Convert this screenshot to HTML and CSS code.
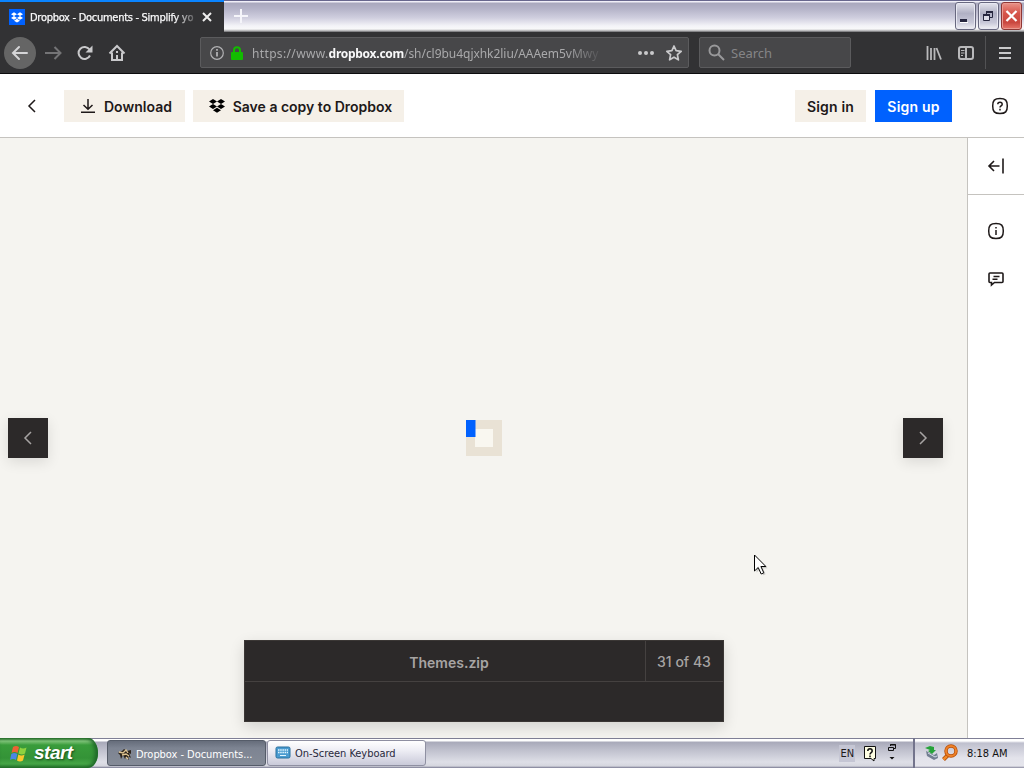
FILE: index.html
```html
<!DOCTYPE html>
<html lang="en">
<head>
<meta charset="utf-8">
<title>Dropbox - Documents - Simplify your life</title>
<link rel="stylesheet" href="styles.css">
</head>
<body>
<svg class="defs" width="0" height="0" aria-hidden="true">
  <symbol id="box" viewBox="0 0 16 14"><path d="M4 0 8 2.500 4 5 0 2.500zM12 0l4 2.500-4 2.500-4-2.500zM4 5l4 2.500L4 10 0 7.500zM12 5l4 2.500-4 2.500-4-2.500zM8 8.700l4 2.500L8 13.700l-4-2.500z"/></symbol>
</svg>
<div class="screen">
  <header class="tabs">
    <div class="tab">
      <span class="favicon"><svg width="12" height="11"><use href="#box"/></svg></span>
      <span class="tab-title">Dropbox - Documents - Simplify yo</span>
      <svg class="tab-close" width="10" height="10" viewBox="0 0 10 10"><path d="M1 1l8 8M9 1L1 9"/></svg>
    </div>
    <svg class="plus" width="16" height="16" viewBox="0 0 16 16"><path d="M8 1v14M1 8h14"/></svg>
    <div class="win-buttons">
      <span class="win"><svg width="20" height="27"><path d="M4 17.500h7" stroke="#26263e" stroke-width="3"/><path d="M4 19.500h8" stroke="#fff"/></svg></span>
      <span class="win"><svg width="20" height="27" fill="none" stroke="#26263e"><path d="M7.500 11V8.500h6v6H11"/><path d="M7 9h7" stroke-width="2"/><path d="M4.500 11.500h6v6h-6z" fill="#dcdce8"/><path d="M4 12h7" stroke-width="2"/></svg></span>
      <span class="win win-close"><svg width="20" height="27" fill="none" stroke="#fff" stroke-width="2.200"><path d="M4.500 8l10 10M14.500 8l-10 10"/></svg></span>
    </div>
  </header>

  <nav class="toolbar">
    <span class="back"><svg width="32" height="32" fill="none" stroke="#d5d5d7" stroke-width="2"><path d="M23 16H9.500M15 10l-6 6 6 6" stroke-linecap="round"/></svg></span>
    <svg class="fwd" width="18" height="16" fill="none" stroke="#747476" stroke-width="2"><path d="M0 8h15M9.500 2l6 6-6 6"/></svg>
    <svg class="reload" width="18" height="18" fill="none" stroke="#c9c9cb" stroke-width="2"><path d="M14 11.500A6 6 0 1 1 13.500 5.500"/><path d="M16.500 1.500v7h-7z" fill="#c9c9cb" stroke="none"/></svg>
    <svg class="home" width="18" height="18" fill="none" stroke="#c9c9cb" stroke-width="2"><path d="M1.500 9.500L9 2l7.500 7.500M4 8.500V16h10V8.500M9 16v-5"/><path d="M8 7h2v2H8z" fill="#c9c9cb" stroke="none"/></svg>
    <div class="urlbar">
      <svg width="16" height="16" fill="none" stroke="#b1b1b3" stroke-width="1.200"><circle cx="8" cy="8" r="6.300"/><path d="M8 7v4.500M8 4v1.700" stroke-width="1.800"/></svg>
      <svg class="lock" width="14" height="16"><path d="M4 7V5.300a3 3 0 0 1 6 0V7" fill="none" stroke="#12bc00" stroke-width="2"/><rect x="1" y="7" width="12" height="8" rx="1" fill="#12bc00"/></svg>
      <span class="url"><span class="scheme">https://www.</span><b>dropbox.com</b>/sh/cl9bu4qjxhk2liu/AAAem5vMwy</span>
      <svg class="dots" width="18" height="6" fill="#c9c9cb"><circle cx="3" cy="3" r="2"/><circle cx="9" cy="3" r="2"/><circle cx="15" cy="3" r="2"/></svg>
      <svg width="18" height="18" fill="none" stroke="#c9c9cb" stroke-width="1.700" stroke-linejoin="round"><path d="M9 2l2.100 4.700 5.100.6-3.800 3.400 1 5.100L9 13.200l-4.400 2.600 1-5.100-3.800-3.400 5.100-.6z"/></svg>
    </div>
    <div class="search">
      <svg width="17" height="17" fill="none" stroke="#99999b" stroke-width="2"><circle cx="6.500" cy="6.500" r="5"/><path d="M10 10l6 6"/></svg>
      <span>Search</span>
    </div>
    <svg class="library" width="16" height="16" fill="none" stroke="#b9b9bb" stroke-width="1.800"><path d="M1.500 1v14M5 3v12M8.500 3v12M10.500 3l4.500 11.500"/></svg>
    <svg class="sidebar-icon" width="16" height="14" fill="none" stroke="#b9b9bb" stroke-width="2"><rect x="1" y="1" width="14" height="12" rx="2"/><path d="M8 1v12"/><path d="M3 4.500h3.500M3 7h3.500M3 9.500h2" stroke-width="1"/></svg>
    <span class="menu"><svg width="12" height="14" stroke="#c9c9cb" stroke-width="2"><path d="M0 2h12M0 7h12M0 12h12"/></svg></span>
  </nav>

  <div class="actions">
    <svg class="chev" width="10" height="14" fill="none" stroke="#1e1919" stroke-width="1.500"><path d="M8 1L2 7l6 6"/></svg>
    <div class="btn download"><svg width="16" height="16" fill="none" stroke="#1e1919" stroke-width="1.500"><path d="M8 1v10M3.500 7L8 11.300 12.500 7M1 14.300h14"/></svg><span>Download</span></div>
    <div class="btn save"><svg width="16" height="14"><use href="#box"/></svg><span>Save a copy to Dropbox</span></div>
    <div class="btn signin">Sign in</div>
    <div class="btn signup">Sign up</div>
    <svg class="help" width="18" height="18" fill="none" stroke="#1e1919" stroke-width="1.500"><path d="M9 1.500c5.500 0 7.300 1.800 7.300 7.500S14.500 16.500 9 16.500 1.700 14.700 1.700 9 3.500 1.500 9 1.500z"/><path d="M6.800 7.300C6.800 4.500 11.200 4.500 11.200 7.200 11.200 8.800 9 8.800 9 10.500M9 11.800v1.600"/></svg>
  </div>

  <main class="content">
    <section class="viewer">
      <span class="pager"><svg width="10" height="14"><path d="M8 1L2 7l6 6"/></svg></span>
      <svg class="loader" width="36" height="36"><path d="M0 0h36v36H0z" fill="#e9e2d5"/><path d="M9 9h18v18H9z" fill="#f9f7f0"/><path d="M0 0h9.500v17H0z" fill="#0061fe"/></svg>
      <span class="pager"><svg width="10" height="14"><path d="M2 1l6 6-6 6"/></svg></span>
      <div class="filebar">
        <div class="filename">Themes.zip</div><div class="count">31 of 43</div>
      </div>
      <svg class="cursor" width="16" height="24"><path d="M3.500 3.500v15l3.500-3.300 3 6 2.500-1-2.500-6h4.500z" fill="#777" opacity=".35"/><path d="M1.500 1v16l3.700-3.500 3 6.500 2.600-1.200-2.900-6.300h5z" fill="#fff" stroke="#000"/></svg>
    </section>
    <aside class="side">
      <div class="collapse"><svg width="18" height="18" fill="none" stroke="#1e1919" stroke-width="1.600"><path d="M12.500 9H2.500M7 4L2 9l5 5M16 1.500v15"/></svg></div>
      <svg width="18" height="18" fill="none" stroke="#1e1919" stroke-width="1.500"><path d="M9 1.500c5.500 0 7.300 1.800 7.300 7.500S14.500 16.500 9 16.500 1.700 14.700 1.700 9 3.500 1.500 9 1.500z"/><path d="M9 8v5M9 5v1.600"/></svg>
      <svg class="comment" width="18" height="18" fill="none" stroke="#1e1919" stroke-width="1.600"><path d="M3 3h12q1 0 1 1v7.500q0 1-1 1H7.500L4.500 15v-2.500H3q-1 0-1-1V4q0-1 1-1zM6.500 6.500h6M5.500 9.300h5"/></svg>
    </aside>
  </main>

  <footer class="taskbar">
    <div class="start">
      <svg width="18" height="18"><path d="M3 3q3-2 6 0L7.500 9q-3-2-6 0z" fill="#ed6234"/><path d="M10 3.500q3 2 6.500 0L15 9.500q-3 2-6.500 0z" fill="#8ed23f"/><path d="M1.300 10q3-2 6 0L6 16q-3-2-6 0z" fill="#4b86e5"/><path d="M8.300 10.500q3 2 6.300 0L13 16.500q-3 2-6 0z" fill="#fac82c"/></svg>
      <span>start</span>
    </div>
    <div class="task active">
      <svg width="16" height="16" fill="none"><path d="M1 7l4-2 2-2 3 2 4-1v4l-2-1 2 5-3-2 1 4-3-3-1 2-2-4-2 4-1-4z" fill="#2d241b"/><path d="M2 6l4 1 3-3 2 3M5 9l4-1 3 2M9 11l2 2" stroke="#dec391" stroke-width="1.300"/></svg>
      <span>Dropbox - Documents...</span>
    </div>
    <div class="task">
      <svg width="16" height="14"><rect x="1" y="1" width="14" height="11" rx="1.500" fill="#4a9bd0" stroke="#28719e"/><path d="M3 4h10M3 6.500h10" stroke="#e1f6ff" stroke-width="1.300" stroke-dasharray="1.500 .7"/><path d="M5 9.500h6" stroke="#e1f6ff"/></svg>
      <span>On-Screen Keyboard</span>
    </div>
    <div class="lang"><span>EN</span>
      <svg width="14" height="16"><path d="M1.500.5h11v12H11v2.500l-3-2.500H1.500z" fill="#ffffe3" stroke="#111"/><path d="M4.800 5C4.800 2 9.200 2 9.200 5 9.200 6.700 7 6.500 7 8.500M7 9.500v1.700" fill="none" stroke="#111" stroke-width="1.500"/></svg>
      <svg class="restore" width="10" height="18" fill="none" stroke="#111"><path d="M3.500 3V1.500h5v4H7M3 2h6M1.500 4.500h5v3h-5z"/><path d="M2.500 14h5L5 16.500z" fill="#111" stroke="none"/></svg>
    </div>
    <div class="tray">
      <svg width="16" height="16"><path d="M2 6l8 4 3-2 1 5-4 2-7-4z" fill="#737f92"/><path d="M4 8l7 4M11 12l2-1" stroke="#d4dfe8"/><path d="M1 3l5-2 4 1v3h2L8 9 4 6l2-1z" fill="#26a33a"/></svg>
      <svg width="18" height="18" fill="none"><path d="M7 11l-4.500 4.500" stroke="#a94706" stroke-width="4"/><path d="M7 11l-4.500 4.500" stroke="#f18a28" stroke-width="2.500"/><circle cx="10" cy="7" r="5" stroke="#b84e08" stroke-width="3.500"/><circle cx="10" cy="7" r="5" stroke="#ee8229" stroke-width="2"/></svg>
      <span>8:18 AM</span>
    </div>
  </footer>
</div>
</body>
</html>
```
FILE: styles.css
```css
* { box-sizing: border-box; }
body { margin: 0; }
svg { display: block; flex: none; }
.defs { position: absolute; }
.screen { width: 1024px; height: 768px; display: flex; flex-direction: column; overflow: hidden; white-space: nowrap; font-family: Inter, "Liberation Sans", sans-serif; color: #1e1919; }

.tabs { height: 32px; display: flex; background: linear-gradient(#68678d 0 1px, #f0eff8 1px 2px, #a9a8bd 3px, #b5b4c9 9px, #d0cfdf 18px, #f4f4f8 26px, #f8f8f9 29px, #aaaaac 31px, #606063); }
.tab { width: 224px; height: 32px; padding: 0 12px 0 9px; display: flex; align-items: center; background: #323234; border-top: 2px solid #0a84ff; }
.favicon { width: 16px; height: 16px; display: grid; place-items: center; background: #0061fe; fill: #fff; flex: none; }
.tab-title { width: 165px; margin-left: 5px; font: 11px "DejaVu Sans Condensed", "DejaVu Sans", sans-serif; font-stretch: condensed; letter-spacing: -.28px; color: #f9f9fa; -webkit-text-stroke: .25px #f9f9fa; mask-image: linear-gradient(90deg, #000 145px, transparent 170px); }
.tab-close { margin-left: 7px; stroke: #eee; stroke-width: 2; }
.plus { margin: 8px 0 0 9px; stroke: #f5f5fa; stroke-width: 2; }
.win-buttons { margin: 2px 2px 0 auto; display: flex; gap: 2px; }
.win { width: 21px; height: 28px; border: 1px solid #68687f; border-radius: 3px; box-shadow: inset 0 0 0 1px #e8e8f2; background: linear-gradient(#e4e4ed, #b1b1c4 40%, #c8c8d8 75%, #f1f1f5); }
.win-close { background: linear-gradient(#e99389, #d65349 40%, #c9473f 75%, #e7766a); border-color: #8f3735; box-shadow: inset 0 0 0 1px #e99a91; }

.toolbar { height: 42px; display: flex; align-items: center; padding: 0 13px 0 4px; background: #323234; border-bottom: 1px solid #0c0c0d; }
.back { width: 32px; height: 32px; border-radius: 50%; background: #656565; }
.fwd { margin-left: 9px; }
.reload { margin-left: 13px; }
.home { margin-left: 14px; }
.urlbar { width: 489px; height: 31px; margin-left: 74px; padding: 0 5px 0 8px; display: flex; align-items: center; background: #474749; border: 1px solid #5b5b5d; border-radius: 2px; }
.lock { margin-left: 5px; }
.url { width: 354px; margin: 0 0 0 8px; padding-top: 1px; overflow: hidden; font: 12px "Noto Sans", sans-serif; letter-spacing: -.04px; color: #a9a9ab; mask-image: linear-gradient(90deg, #000 315px, transparent 352px); }
.scheme { letter-spacing: .35px; }
.url b { color: #f9f9fa; font-weight: 700; letter-spacing: -.27px; }
.dots { margin: 0 10px 0 auto; }
.search { width: 152px; height: 31px; margin-left: 10px; padding-left: 8px; display: flex; align-items: center; gap: 6px; background: #474749; border: 1px solid #5b5b5d; border-radius: 2px; font: 13px "Noto Sans", sans-serif; color: #858587; }
.library { margin-left: 75px; }
.sidebar-icon { margin-left: 16px; }
.menu { height: 33px; margin-left: auto; padding-left: 13px; display: flex; align-items: center; border-left: 1px solid #525254; }

.actions { height: 64px; display: flex; align-items: center; padding: 0 15px 0 27px; background: #fff; border-bottom: 1px solid #c5c3bf; }
.btn { height: 32px; padding-top: 1px; display: flex; align-items: center; justify-content: center; gap: 8px; font-weight: 600; font-size: 14px; background: #f5f0e8; }
.download { width: 121px; margin-left: 27px; padding-left: 3px; letter-spacing: .05px; }
.save { width: 211px; margin-left: 8px; padding-left: 4px; }
.signin { width: 71px; margin-left: auto; letter-spacing: .2px; }
.signup { width: 77px; margin: 0 39px 0 9px; letter-spacing: .2px; color: #fff; background: #0061fe; }

.content { height: 600px; display: flex; background: #f5f4f0; }
.viewer { width: 967px; padding: 0 24px 0 8px; position: relative; display: flex; align-items: center; justify-content: space-between; }
.pager { width: 40px; height: 40px; display: grid; place-items: center; background: #2c2929; box-shadow: 0 4px 14px #0000001c; fill: none; stroke: #a7a4a3; stroke-width: 1.5; }
.loader { margin-left: 17px; }
.filebar { position: absolute; left: 244px; bottom: 16px; width: 480px; height: 82px; display: grid; grid-template: 41px 1fr / 401px 1fr; background: #2c2929; border: 1px solid #3b3735; box-shadow: 0 5px 14px #00000024; color: #a7a4a3; font-size: 14px; text-align: center; line-height: 43px; }
.filename { padding-left: 8px; font-weight: 600; border-right: 1px solid #454140; border-bottom: 1px solid #454140; }
.count { padding-right: 1px; font-weight: 500; line-height: 41px; border-bottom: 1px solid #454140; }
.cursor { position: absolute; left: 753px; top: 416px; }
.side { width: 57px; display: flex; flex-direction: column; align-items: center; background: #fff; border-left: 1px solid #c5c3bf; }
.collapse { width: 100%; height: 57px; margin-bottom: 27px; display: grid; place-items: center; border-bottom: 1px solid #c5c3bf; }
.comment { margin-top: 30px; }

.taskbar { height: 30px; display: flex; font: 11px "DejaVu Sans Condensed", "DejaVu Sans", sans-serif; font-stretch: condensed; letter-spacing: -.04px; background: linear-gradient(#7f7f96 0 1px, #fff 1px 3px, #a8a9b9 4px, #bfc0cd 12px, #dedfe7 24px, #d5d6de 28px, #777890); }
.start { width: 98px; height: 30px; padding-left: 10px; display: flex; align-items: center; gap: 6px; background: linear-gradient(#2a712b, #83c77c 3px, #399c3b 7px, #349337 20px, #46a646 26px, #24722a); border-radius: 0 10px 10px 0 / 0 15px 15px 0; box-shadow: inset -3px 0 4px #1d6527; }
.start span { font: italic bold 19px "Liberation Sans", sans-serif; letter-spacing: -.5px; color: #fff; text-shadow: 1px 1px 2px #194c1b; }
.task { width: 159px; height: 26px; margin: 2px 0 0 1px; padding: 0 0 0 7px; display: flex; align-items: center; gap: 4px; color: #29293c; background: linear-gradient(#fff, #ededf4 40%, #c9cad9); border: 1px solid #8f90a2; border-radius: 3px; }
.active { margin-left: 9px; padding: 2px 0 0 9px; gap: 3px; background: linear-gradient(#666d7b, #7d8492 30%, #858b97); color: #fff; border-color: #555c69; }
.lang { margin-left: auto; padding: 1px 16px 0 0; display: flex; align-items: center; }
.lang span { padding: 2px 1px; background: #c5c6d4; }
.lang svg { margin-left: 8px; }
.lang .restore { margin: -4px 0 0 10px; }
.tray { width: 111px; padding: 0 0 0 9px; display: flex; align-items: center; gap: 1px; border-left: 2px solid #73748c; background: linear-gradient(#7f7f96 0 1px, #fff 1px 3px, #bfc0ce 5px, #e3e3eb 20px, #e5e5ec 28px, #85859b); color: #111; }
.tray span { margin-left: 7px; }
```
